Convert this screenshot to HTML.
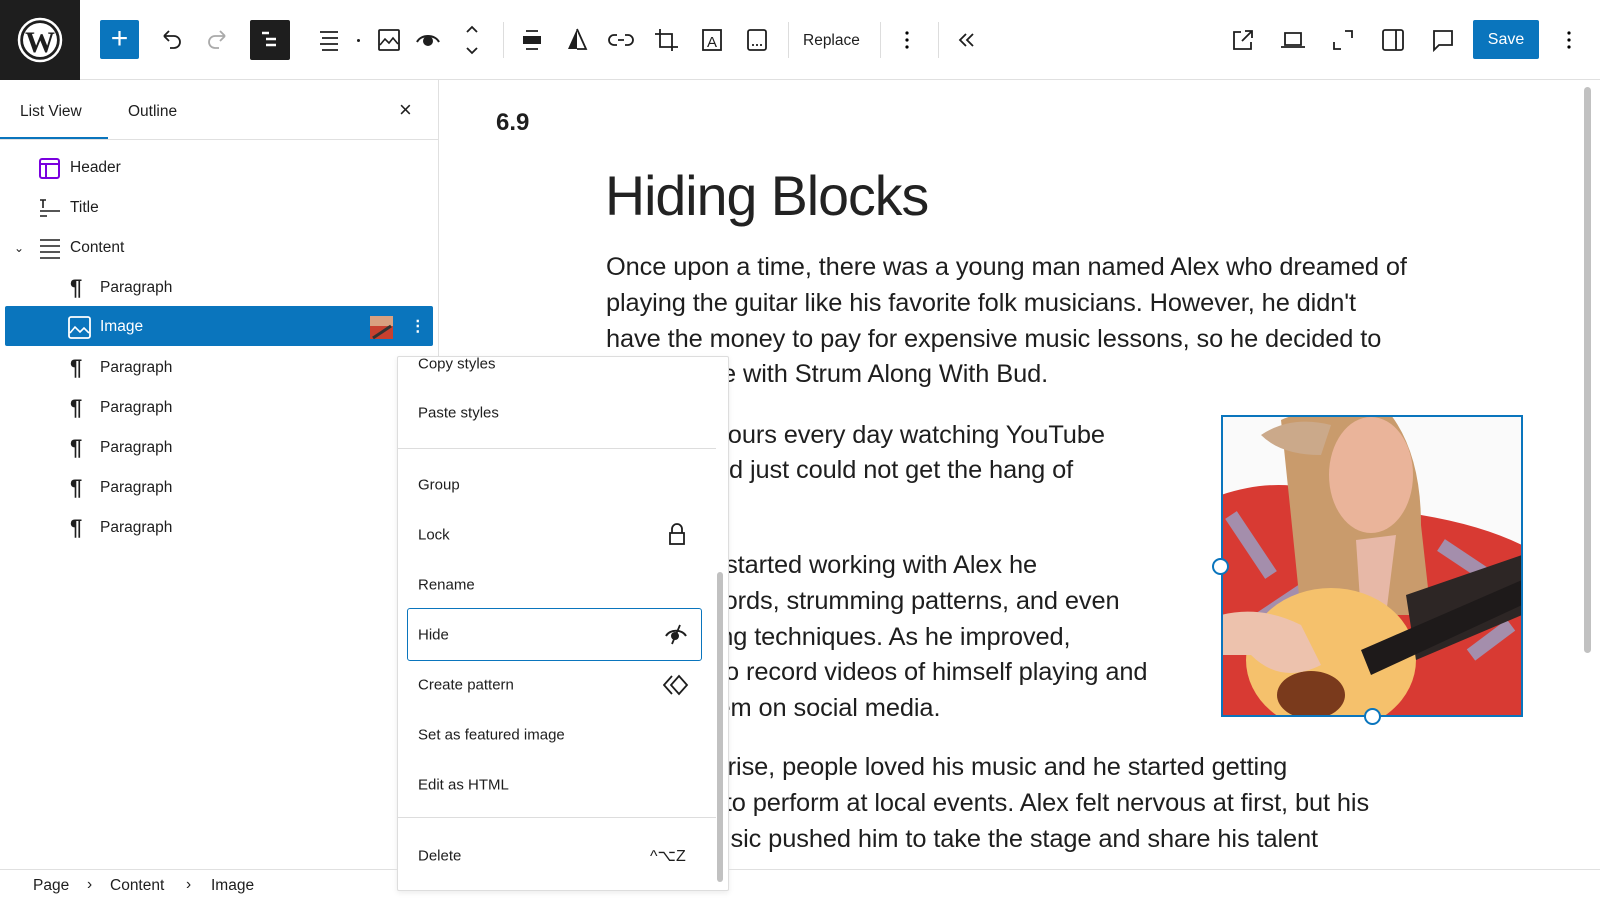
<!DOCTYPE html>
<html><head><meta charset="utf-8">
<style>
*{box-sizing:border-box;margin:0;padding:0}
body{width:1600px;height:900px;overflow:hidden;background:#fff;font-family:"Liberation Sans",sans-serif;color:#1e1e1e;position:relative}
.abs{position:absolute}
.top{left:0;top:0;width:1600px;height:80px;border-bottom:1px solid #e0e0e0;background:#fff}
.logo{left:0;top:0;width:80px;height:80px;background:#1e1e1e}
.ic{position:absolute;top:24px;width:32px;height:32px;transform:translateX(-50%)}
.sep{position:absolute;top:22px;width:1px;height:36px;background:#ddd}
.side{left:0;top:80px;width:439px;height:789px;border-right:1px solid #e0e0e0}
.row{position:absolute;left:0;height:40px;width:439px;font-size:15.5px;line-height:40px}
.row span{position:absolute}
.para{position:absolute;left:606px;font-size:25.4px;white-space:nowrap;color:#1e1e1e;letter-spacing:-0.1px}
.menu{left:397px;top:356px;width:332px;height:535px;background:#fff;border:1px solid #ddd;border-radius:2px;box-shadow:0 2px 6px rgba(0,0,0,.08);overflow:hidden}
.mi{position:absolute;left:20px;font-size:15px;transform:translateY(-50%)}
</style></head><body>

<div class="abs top"></div>
<div class="abs logo">
<svg width="80" height="80" viewBox="0 0 80 80"><circle cx="40" cy="40" r="21" fill="none" stroke="#fff" stroke-width="2.5"/><circle cx="40" cy="40" r="17" fill="#fff"/><text x="40" y="52" text-anchor="middle" font-family="Liberation Serif" font-weight="bold" font-size="30" fill="#1e1e1e">W</text></svg>
</div>
<div class="abs" style="left:100px;top:20px;width:39px;height:39px;background:#0a75bd;border-radius:2px;color:#fff;font-size:30px;line-height:37px;text-align:center">+</div>
<svg class="ic" style="left:170px" viewBox="0 0 32 32"><path d="M10 12h10a6 6 0 0 1 0 12h-4M10 12l5-5M10 12l5 5" fill="none" stroke="#1e1e1e" stroke-width="1.8"/></svg>
<svg class="ic" style="left:219px" viewBox="0 0 32 32"><path d="M22 12H12a6 6 0 0 0 0 12h4M22 12l-5-5M22 12l-5 5" fill="none" stroke="#aaa" stroke-width="1.8"/></svg>
<div class="abs" style="left:250px;top:20px;width:40px;height:40px;background:#1e1e1e;border-radius:2px"></div>
<svg class="ic" style="left:270px" viewBox="0 0 32 32"><path d="M8 9h7M12 15h10M12 21h10" stroke="#fff" stroke-width="2.5"/></svg>
<svg class="ic" style="left:329px" viewBox="0 0 32 32"><path d="M7 8h18M9 14h16M7 20h18M9 26h16" stroke="#1e1e1e" stroke-width="1.8"/></svg>
<div class="abs" style="left:357px;top:39px;width:3px;height:3px;background:#1e1e1e;border-radius:50%"></div>
<svg class="ic" style="left:389px" viewBox="0 0 32 32"><rect x="6" y="6" width="20" height="20" rx="1" fill="none" stroke="#1e1e1e" stroke-width="1.8"/><path d="M7 21l5-6 4 4 4-5 5 6" fill="none" stroke="#1e1e1e" stroke-width="1.6"/></svg>
<svg class="ic" style="left:428px" viewBox="0 0 32 32"><path d="M5 18c4-8 18-8 22 0" fill="none" stroke="#1e1e1e" stroke-width="2"/><circle cx="16" cy="17" r="5" fill="#1e1e1e"/></svg>
<svg class="ic" style="left:472px" viewBox="0 0 32 32"><path d="M11 8l5-5 5 5M11 24l5 5 5-5" fill="none" stroke="#1e1e1e" stroke-width="1.8"/></svg>
<div class="sep" style="left:503px"></div>
<svg class="ic" style="left:532px" viewBox="0 0 32 32"><path d="M10 7h12M10 25h12" stroke="#1e1e1e" stroke-width="1.8"/><rect x="7" y="12" width="18" height="8" fill="#1e1e1e"/></svg>
<svg class="ic" style="left:577px" viewBox="0 0 32 32"><path d="M16 5L7 25h9z" fill="#1e1e1e"/><path d="M16 5l9 20h-9" fill="none" stroke="#1e1e1e" stroke-width="1.8"/></svg>
<svg class="ic" style="left:621px" viewBox="0 0 32 32"><path d="M12 11H9a5 5 0 0 0 0 10h3M20 11h3a5 5 0 0 1 0 10h-3M13 16h6" fill="none" stroke="#1e1e1e" stroke-width="1.8"/></svg>
<svg class="ic" style="left:666px" viewBox="0 0 32 32"><path d="M10 5v18h18M5 10h17v17" fill="none" stroke="#1e1e1e" stroke-width="1.8"/></svg>
<svg class="ic" style="left:712px" viewBox="0 0 32 32"><rect x="7" y="6" width="18" height="20" fill="none" stroke="#1e1e1e" stroke-width="1.8"/><text x="16" y="23" text-anchor="middle" font-size="15" font-family="Liberation Sans" fill="#1e1e1e">A</text></svg>
<svg class="ic" style="left:757px" viewBox="0 0 32 32"><rect x="7" y="6" width="18" height="20" rx="2" fill="none" stroke="#1e1e1e" stroke-width="1.8"/><path d="M11 21h2M15 21h2M19 21h2" stroke="#1e1e1e" stroke-width="1.8"/></svg>
<div class="sep" style="left:788px"></div>
<div class="abs" style="left:803px;top:32px;font-size:15.5px">Replace</div>
<div class="sep" style="left:880px"></div>
<svg class="ic" style="left:907px" viewBox="0 0 32 32"><circle cx="16" cy="9" r="1.6"/><circle cx="16" cy="16" r="1.6"/><circle cx="16" cy="23" r="1.6"/></svg>
<div class="sep" style="left:938px"></div>
<svg class="ic" style="left:966px" viewBox="0 0 32 32"><path d="M16 10l-6 6 6 6M23 10l-6 6 6 6" fill="none" stroke="#1e1e1e" stroke-width="1.8"/></svg>

<svg class="ic" style="left:1243px" viewBox="0 0 32 32"><path d="M14 8H7v17h17v-7M18 7h7v7M25 7L15 17" fill="none" stroke="#1e1e1e" stroke-width="1.8"/></svg>
<svg class="ic" style="left:1293px" viewBox="0 0 32 32"><path d="M8 9h16v12H8zM4 23h24" fill="none" stroke="#1e1e1e" stroke-width="1.8"/></svg>
<svg class="ic" style="left:1343px" viewBox="0 0 32 32"><path d="M7 18v7h7M18 7h7v7" fill="none" stroke="#1e1e1e" stroke-width="1.8"/></svg>
<svg class="ic" style="left:1393px" viewBox="0 0 32 32"><rect x="6" y="6" width="20" height="20" rx="2" fill="none" stroke="#1e1e1e" stroke-width="1.8"/><path d="M19 6v20" stroke="#1e1e1e" stroke-width="1.8"/></svg>
<svg class="ic" style="left:1443px" viewBox="0 0 32 32"><path d="M7 7h18v14H12l-5 5z" fill="none" stroke="#1e1e1e" stroke-width="1.8"/></svg>
<div class="abs" style="left:1473px;top:20px;width:66px;height:39px;background:#0a75bd;border-radius:2px;color:#fff;font-size:16px;line-height:40px;text-align:center">Save</div>
<svg class="ic" style="left:1569px" viewBox="0 0 32 32"><circle cx="16" cy="9" r="1.6"/><circle cx="16" cy="16" r="1.6"/><circle cx="16" cy="23" r="1.6"/></svg>

<div class="abs side"></div>
<div class="abs" style="left:0;top:139px;width:439px;height:1px;background:#e0e0e0"></div>
<div class="abs" style="left:0;top:137px;width:108px;height:2px;background:#0a75bd"></div>
<div class="abs" style="left:20px;top:103px;font-size:15.5px">List View</div>
<div class="abs" style="left:128px;top:103px;font-size:15.5px">Outline</div>
<div class="abs" style="left:399px;top:97px;font-size:22px">×</div>

<div class="row" style="top:148px"><svg class="abs" style="left:39px;top:10px" width="21" height="21"><rect x="1" y="1" width="19" height="19" rx="2" fill="none" stroke="#7a00df" stroke-width="2"/><path d="M1 6h19M7 6v14" stroke="#7a00df" stroke-width="2"/></svg><span style="left:70px">Header</span></div>
<div class="row" style="top:188px"><svg class="abs" style="left:39px;top:10px" width="22" height="22"><path d="M1 2h6M4 2v8M1 13h20M1 18h7" stroke="#1e1e1e" stroke-width="1.6"/></svg><span style="left:70px">Title</span></div>
<div class="row" style="top:228px"><span style="left:14px;font-size:12px">⌄</span><svg class="abs" style="left:39px;top:10px" width="22" height="22"><path d="M1 2h20M1 8h20M1 14h20M1 20h20" stroke="#1e1e1e" stroke-width="1.6"/></svg><span style="left:70px">Content</span></div>
<div class="row" style="top:268px"><span style="left:70px;font-size:22px;font-weight:bold">¶</span><span style="left:100px">Paragraph</span></div>
<div class="abs" style="left:5px;top:306px;width:428px;height:40px;background:#0a75bd;border-radius:2px"></div>
<div class="row" style="top:307px;color:#fff"><svg class="abs" style="left:68px;top:9px" width="23" height="23"><rect x="1" y="1" width="21" height="21" rx="2" fill="none" stroke="#fff" stroke-width="1.8"/><path d="M2 17l5-6 5 5 4-4 5 5" fill="none" stroke="#fff" stroke-width="1.6"/></svg><span style="left:100px">Image</span>
<svg class="abs" style="left:370px;top:9px" width="23" height="23"><rect width="23" height="23" fill="#d9a080"/><rect y="10" width="23" height="13" fill="#c8402f"/><path d="M3 22l18-12" stroke="#333" stroke-width="3"/></svg>
<span style="left:410px;font-weight:bold">⋮</span></div>
<div class="row" style="top:348px"><span style="left:70px;font-size:22px;font-weight:bold">¶</span><span style="left:100px">Paragraph</span></div>
<div class="row" style="top:388px"><span style="left:70px;font-size:22px;font-weight:bold">¶</span><span style="left:100px">Paragraph</span></div>
<div class="row" style="top:428px"><span style="left:70px;font-size:22px;font-weight:bold">¶</span><span style="left:100px">Paragraph</span></div>
<div class="row" style="top:468px"><span style="left:70px;font-size:22px;font-weight:bold">¶</span><span style="left:100px">Paragraph</span></div>
<div class="row" style="top:508px"><span style="left:70px;font-size:22px;font-weight:bold">¶</span><span style="left:100px">Paragraph</span></div>

<div class="abs" style="left:496px;top:109px;font-size:24px;font-weight:bold">6.9</div>
<div class="abs" style="left:605px;top:164px;font-size:55.5px;letter-spacing:-1px;color:#222">Hiding Blocks</div>
<div class="para" style="top:253px">Once upon a time, there was a young man named Alex who dreamed of</div>
<div class="para" style="top:289px">playing the guitar like his favorite folk musicians. However, he didn't</div>
<div class="para" style="top:325px">have the money to pay for expensive music lessons, so he decided to</div>
<div class="para" style="top:360px">learn online with Strum Along With Bud.</div>
<div class="para" style="top:421px">He spent hours every day watching YouTube</div>
<div class="para" style="top:456px">tutorials and just could not get the hang of</div>
<div class="para" style="top:551px">Once Bud started working with Alex he</div>
<div class="para" style="top:587px">learned chords, strumming patterns, and even</div>
<div class="para" style="top:623px">fingerpicking techniques. As he improved,</div>
<div class="para" style="top:658px">he began to record videos of himself playing and</div>
<div class="para" style="top:694px">sharing them on social media.</div>
<div class="para" style="top:753px">To his surprise, people loved his music and he started getting</div>
<div class="para" style="top:789px">invitations to perform at local events. Alex felt nervous at first, but his</div>
<div class="para" style="top:825px">love for music pushed him to take the stage and share his talent</div>

<svg class="abs" style="left:1221px;top:415px" width="301" height="301" viewBox="0 0 301 301">
<rect width="301" height="301" fill="#fafafa"/>
<path d="M0 80 Q60 60 110 80 L200 100 Q260 110 301 130 L301 301 L0 301Z" fill="#d83a33"/>
<path d="M10 100l40 60M30 210l60-40M220 130l60 40M250 240l40-30" stroke="#8fb2e0" stroke-width="14" opacity=".7"/>
<path d="M60 5 Q80 -5 120 0 L170 0 Q200 40 200 110 L210 200 L80 200 Q70 100 60 5Z" fill="#c99b6c"/>
<ellipse cx="150" cy="60" rx="42" ry="58" fill="#eab49a"/>
<path d="M40 20 Q70 0 110 10 L100 40 Q60 40 40 20Z" fill="#cba98a"/>
<path d="M135 125 L175 120 L165 200 L140 200Z" fill="#e7b8a7"/>
<ellipse cx="110" cy="245" rx="85" ry="72" fill="#f5c16c"/>
<ellipse cx="90" cy="280" rx="34" ry="24" fill="#7a3a1c"/>
<path d="M185 180 L301 140 L301 200 L195 245Z" fill="#2d2625"/>
<path d="M140 235 L301 165 L301 190 L150 260Z" fill="#1e1a1a"/>
<path d="M0 200 Q40 190 80 210 L100 250 Q60 270 30 240 L0 240Z" fill="#edc2ad"/>
</svg>
<div class="abs" style="left:1221px;top:415px;width:302px;height:302px;border:2px solid #0a75bd"></div>
<div class="abs" style="left:1212px;top:558px;width:17px;height:17px;border:2px solid #0a75bd;border-radius:50%;background:#fff"></div>
<div class="abs" style="left:1364px;top:708px;width:17px;height:17px;border:2px solid #0a75bd;border-radius:50%;background:#fff"></div>

<div class="abs" style="left:1584px;top:87px;width:7px;height:566px;background:#c1c1c1;border-radius:4px"></div>

<div class="abs menu">
<div class="mi" style="top:7px">Copy styles</div>
<div class="mi" style="top:56px">Paste styles</div>
<div class="abs" style="left:0;top:91px;width:318px;height:1px;background:#ddd"></div>
<div class="mi" style="top:128px">Group</div>
<div class="mi" style="top:178px">Lock</div>
<svg class="abs" style="left:270px;top:165px" width="18" height="24"><path d="M4 11V7a5 5 0 0 1 10 0v4" fill="none" stroke="#1e1e1e" stroke-width="1.8"/><rect x="2" y="11" width="14" height="11" fill="none" stroke="#1e1e1e" stroke-width="1.8"/></svg>
<div class="mi" style="top:228px">Rename</div>
<div class="abs" style="left:9px;top:251px;width:295px;height:53px;border:1.5px solid #0a75bd;border-radius:3px"></div>
<div class="mi" style="top:278px">Hide</div>
<svg class="abs" style="left:266px;top:265px" width="24" height="24"><path d="M2 14c4-7 16-7 20 0" fill="none" stroke="#1e1e1e" stroke-width="2"/><circle cx="11" cy="14" r="4" fill="#1e1e1e"/><path d="M16 3L8 22" stroke="#1e1e1e" stroke-width="1.8"/></svg>
<div class="mi" style="top:328px">Create pattern</div>
<svg class="abs" style="left:265px;top:316px" width="26" height="24"><path d="M9 3L1 12l8 9M16 3l8 9-8 9-8-9z" fill="none" stroke="#1e1e1e" stroke-width="1.8"/></svg>
<div class="mi" style="top:378px">Set as featured image</div>
<div class="mi" style="top:428px">Edit as HTML</div>
<div class="abs" style="left:0;top:460px;width:318px;height:1px;background:#ddd"></div>
<div class="mi" style="top:499px">Delete</div>
<div class="mi" style="top:499px;left:252px;font-size:16px">^⌥Z</div>
<div class="abs" style="left:319px;top:215px;width:6px;height:310px;background:#c1c1c1;border-radius:3px"></div>
</div>

<div class="abs" style="left:0;top:869px;width:397px;height:1px;background:#e0e0e0"></div>
<div class="abs" style="left:729px;top:869px;width:871px;height:1px;background:#e0e0e0"></div>
<div class="abs" style="left:33px;top:877px;font-size:15.5px">Page</div>
<div class="abs" style="left:87px;top:876px;font-size:15.5px">›</div>
<div class="abs" style="left:110px;top:877px;font-size:15.5px">Content</div>
<div class="abs" style="left:186px;top:876px;font-size:15.5px">›</div>
<div class="abs" style="left:211px;top:877px;font-size:15.5px">Image</div>
</body></html>
